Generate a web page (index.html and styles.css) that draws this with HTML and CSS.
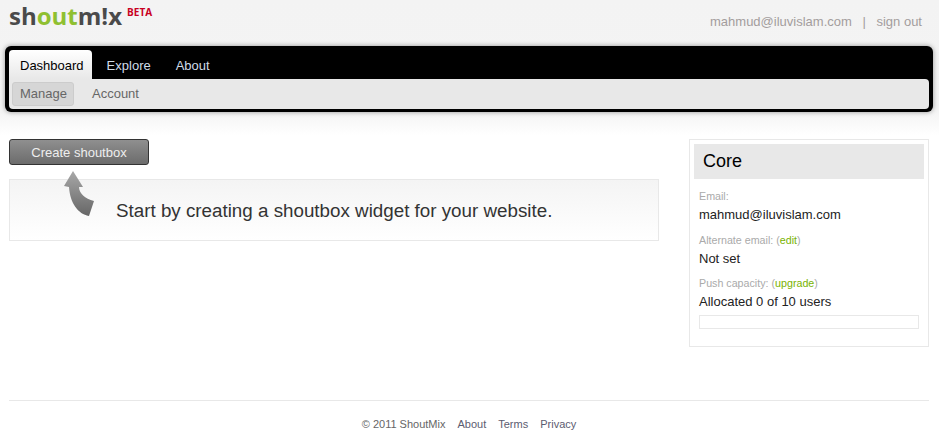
FILE: index.html
```html
<!DOCTYPE html>
<html lang="en">
<head>
  <meta charset="UTF-8" />
  <title>ShoutMix Dashboard</title>
  <link rel="stylesheet" href="styles.css">
</head>
<body>

  <header class="top">
    <div class="logo">
      <span class="logo-name">sh<span class="logo-green">out</span>m!x</span>
      <span class="beta">BETA</span>
    </div>
    <div class="account">
      <a href="#">mahmud@iluvislam.com</a>
      <span class="sep">|</span>
      <a href="#">sign out</a>
    </div>
  </header>

  <nav class="nav">
    <ul class="tabs">
      <li class="tab active">Dashboard</li>
      <li class="tab">Explore</li>
      <li class="tab">About</li>
    </ul>
    <ul class="subtabs">
      <li class="subtab active">Manage</li>
      <li class="subtab">Account</li>
    </ul>
  </nav>

  <main class="content">
    <section class="left">
      <a class="btn" href="#">Create shoutbox</a>
      <div class="promo">
        <svg class="arrow" width="32" height="48" viewBox="0 0 32 48">
          <defs>
            <linearGradient id="arrowfill" x1="0" y1="0" x2="0" y2="1">
              <stop offset="0" stop-color="#a8a8a8"/>
              <stop offset="1" stop-color="#666"/>
            </linearGradient>
          </defs>
          <path d="M10 1 L20 17 L16 17 C16 23 22 29 31 31 L26 46 C15 44 7 33 6 17 L1 16 Z" fill="url(#arrowfill)"/>
        </svg>
        <p>Start by creating a shoutbox widget for your website.</p>
      </div>
    </section>

    <aside class="side">
      <h2>Core</h2>
      <div class="field">
        <div class="label">Email:</div>
        <div class="value">mahmud@iluvislam.com</div>
      </div>
      <div class="field">
        <div class="label">Alternate email: (<a href="#">edit</a>)</div>
        <div class="value">Not set</div>
      </div>
      <div class="field push">
        <div class="label">Push capacity: (<a href="#">upgrade</a>)</div>
        <div class="value">Allocated 0 of 10 users</div>
        <div class="meter"></div>
      </div>
    </aside>
  </main>

  <footer class="foot">
    <span>&copy; 2011 ShoutMix</span>
    <a href="#">About</a>
    <a href="#">Terms</a>
    <a href="#">Privacy</a>
  </footer>

</body>
</html>
```

FILE: styles.css
```css
body {
  font-family: "Liberation Sans", Arial, sans-serif;
  background: linear-gradient(#f3f3f3, #f4f4f4 112px, #fff 135px) no-repeat;
  color: #222;
  margin: 0;
  padding: 0;
  font-size: 13px;
}
a {
  text-decoration: none;
}
ul {
  list-style: none;
  margin: 0;
  padding: 0;
}

/* top bar */
.top {
  height: 46px;
  display: flex;
  justify-content: space-between;
  padding: 0 17px 0 9px;
}
.logo {
  display: flex;
  align-items: flex-start;
}
.logo-name {
  font-family: "Open Sans", sans-serif;
  font-weight: 700;
  font-size: 24px;
  line-height: 32px;
  color: #4a4a4a;
}
.logo-green {
  color: #8fc031;
}
.beta {
  font-family: "Open Sans", sans-serif;
  font-weight: 700;
  font-size: 10px;
  line-height: 14px;
  margin: 5px 0 0 5px;
  color: #c8001e;
}
.account {
  padding-top: 14px;
  line-height: 16px;
  color: #a39d9d;
}
.account a {
  color: #a39d9d;
}
.sep {
  margin: 0 7px;
}

/* main nav */
.nav {
  margin: 0 6px 0 5px;
  height: 66px;
  box-sizing: border-box;
  padding: 4px 4px 3px;
  background: #000;
  border-radius: 6px;
  box-shadow: 0 0 5px rgba(0, 0, 0, .4);
}
.tabs {
  display: flex;
  height: 29px;
}
.tab {
  padding: 0 10px 0 15px;
  line-height: 31px;
  color: #cfdce8;
}
.tab.active {
  color: #000;
  padding: 0 8px 0 11px;
  background: linear-gradient(#fff, #e8e8e8);
  border-radius: 4px 4px 0 0;
}
.subtabs {
  display: flex;
  align-items: center;
  height: 30px;
  padding-left: 3px;
  background: #e8e8e8;
  border-radius: 0 4px 4px 4px;
}
.subtab {
  padding: 0 18px;
  color: #666;
  line-height: 24px;
}
.subtab.active {
  padding: 0 6px 0 7px;
  background: #d6d6d6;
  border: 1px solid #ccc;
  border-radius: 3px;
  line-height: 22px;
}

/* content */
.content {
  display: flex;
  justify-content: space-between;
  padding: 27px 10px 0 9px;
  height: 288px;
  box-sizing: border-box;
}
.left {
  width: 650px;
}
.btn {
  display: block;
  box-sizing: border-box;
  width: 140px;
  height: 26px;
  line-height: 25px;
  text-align: center;
  color: #eee;
  background: linear-gradient(#8f8f8f, #6c6c6c);
  border: 1px solid #333;
  border-radius: 3px;
}
.promo {
  position: relative;
  box-sizing: border-box;
  height: 62px;
  margin-top: 14px;
  padding-left: 106px;
  border: 1px solid #e8e8e8;
  background: linear-gradient(#f4f4f4, #fff);
}
.promo p {
  margin: 0;
  font-size: 18.8px;
  line-height: 61px;
  color: #333;
}
.arrow {
  position: absolute;
  left: 53px;
  top: -10px;
}

/* core box */
.side {
  box-sizing: border-box;
  width: 240px;
  height: 208px;
  padding: 4px;
  border: 1px solid #e8e8e8;
}
.side h2 {
  margin: 0 0 11px;
  padding-left: 9px;
  background: #e8e8e8;
  font-size: 18px;
  font-weight: normal;
  line-height: 35px;
  color: #000;
}
.field {
  padding: 0 5px;
  margin-bottom: 6px;
}
.field.push {
  margin-top: -1px;
}
.label {
  font-size: 10.7px;
  line-height: 12px;
  color: #aaa;
}
.label a {
  color: #77b300;
}
.value {
  line-height: 26px;
  color: #222;
}
.meter {
  box-sizing: border-box;
  height: 14px;
  border: 1px solid #e8e8e8;
}

/* footer */
.foot {
  margin: 0 10px 0 9px;
  padding-top: 16px;
  border-top: 1px solid #e8e8e8;
  display: flex;
  justify-content: center;
  gap: 12px;
  font-size: 11px;
  line-height: 14px;
  color: #666;
}
.foot a {
  color: #5c5c70;
}
```
